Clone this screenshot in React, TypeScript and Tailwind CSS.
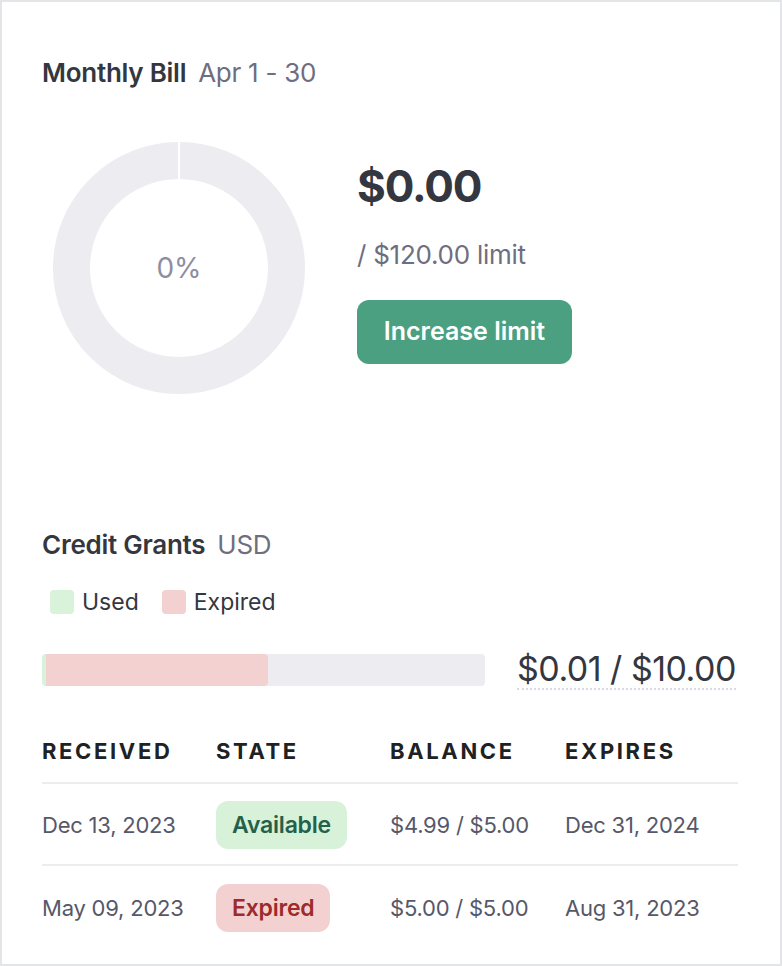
import React from "react";

const rows = [
  { received: "Dec 13, 2023", state: "Available", balance: "$4.99 / $5.00", expires: "Dec 31, 2024" },
  { received: "May 09, 2023", state: "Expired", balance: "$5.00 / $5.00", expires: "Aug 31, 2023" },
];

const Donut = () => (
  <svg width="252" height="252" viewBox="0 0 252 252" className="shrink-0">
    <circle cx="126" cy="126" r="107.5" fill="none" stroke="#ececf1" strokeWidth="37" />
    <rect x="125" y="0" width="2" height="40" fill="#ffffff" />
    <text x="126" y="136" textAnchor="middle" fontSize="28" fill="#8e8ea0" fontFamily="Inter, sans-serif">
      0%
    </text>
  </svg>
);

const Badge = ({ state }: { state: string }) => {
  const available = state === "Available";
  return (
    <span
      className={
        available
          ? "inline-flex h-[48px] items-center rounded-[12px] bg-[#d8f2d9] px-4 text-[23px] font-semibold text-[#24604a]"
          : "inline-flex h-[48px] items-center rounded-[12px] bg-[#f3d1d1] px-4 text-[23px] font-semibold text-[#9c2b2b]"
      }
    >
      {state}
    </span>
  );
};

export default function App() {
  return (
    <div
      className="box-border h-[966px] w-[782px] border-2 border-[#e3e5e8] bg-white px-[40px] pt-[56px] text-[#353740]"
      style={{ fontFamily: "Inter, 'Noto Sans', sans-serif" }}
    >
      {/* Monthly bill */}
      <div className="flex items-baseline gap-3 leading-[30px]">
        <span className="text-[26px] font-semibold tracking-[-0.01em]">Monthly Bill</span>
        <span className="text-[26px] tracking-[-0.01em] text-[#6e6e80]">Apr 1 - 30</span>
      </div>

      <div className="mt-[54px] flex">
        <div className="ml-[11px]">
          <Donut />
        </div>
        <div className="ml-[52px] flex flex-col items-start pt-[18px]">
          <div className="text-[44px] font-bold leading-[52px] tracking-tight">$0.00</div>
          <div className="mt-[28px] text-[26px] leading-[30px] tracking-[-0.01em] text-[#6e6e80]">/ $120.00 limit</div>
          <button className="mt-[30px] h-[64px] w-[215px] rounded-[12px] bg-[#4aa080] text-[25px] font-semibold text-white">
            Increase limit
          </button>
        </div>
      </div>

      {/* Credit grants */}
      <div className="mt-[136px] flex items-baseline gap-3 leading-[30px]">
        <span className="text-[26px] font-semibold tracking-[-0.01em]">Credit Grants</span>
        <span className="text-[26px] tracking-[-0.01em] text-[#6e6e80]">USD</span>
      </div>

      <div className="mt-[27px] ml-[8px] flex items-center text-[23px] leading-[30px]">
        <span className="h-[24px] w-[24px] rounded-[4px] bg-[#d8f3da]" />
        <span className="ml-[8px]">Used</span>
        <span className="ml-[23px] h-[24px] w-[24px] rounded-[4px] bg-[#f3d1d1]" />
        <span className="ml-[8px]">Expired</span>
      </div>

      <div className="mt-[33px] flex items-center">
        <div className="flex h-[32px] w-[443px] overflow-hidden rounded-[4px] bg-[#ececf1]">
          <div className="w-[4px] bg-[#d8f3da]" />
          <div className="w-[222px] rounded-r-[4px] bg-[#f3d1d1]" />
        </div>
        <span className="ml-[32px] border-b-2 border-dotted border-[#d9d9e3] text-[34px] leading-[38px] tracking-[-0.015em]">
          $0.01 / $10.00
        </span>
      </div>

      {/* Table */}
      <div className="mt-[30px] w-[696px]">
        <div className="grid h-[64px] grid-cols-[174px_174px_175px_1fr] items-center border-b-2 border-[#ececf1] text-[22px] font-bold uppercase tracking-[0.12em] text-[#202123]">
          <div>Received</div>
          <div>State</div>
          <div>Balance</div>
          <div>Expires</div>
        </div>
        {rows.map((r, i) => (
          <div
            key={r.received}
            className={
              i === 0
                ? "grid h-[82px] grid-cols-[174px_174px_175px_1fr] items-center border-b-2 border-[#ececf1] pt-[2px] text-[22px] tracking-[-0.01em] text-[#565869]"
                : "grid h-[82px] grid-cols-[174px_174px_175px_1fr] items-center pt-[2px] text-[22px] tracking-[-0.01em] text-[#565869]"
            }
          >
            <div>{r.received}</div>
            <div>
              <Badge state={r.state} />
            </div>
            <div>{r.balance}</div>
            <div>{r.expires}</div>
          </div>
        ))}
      </div>
    </div>
  );
}
